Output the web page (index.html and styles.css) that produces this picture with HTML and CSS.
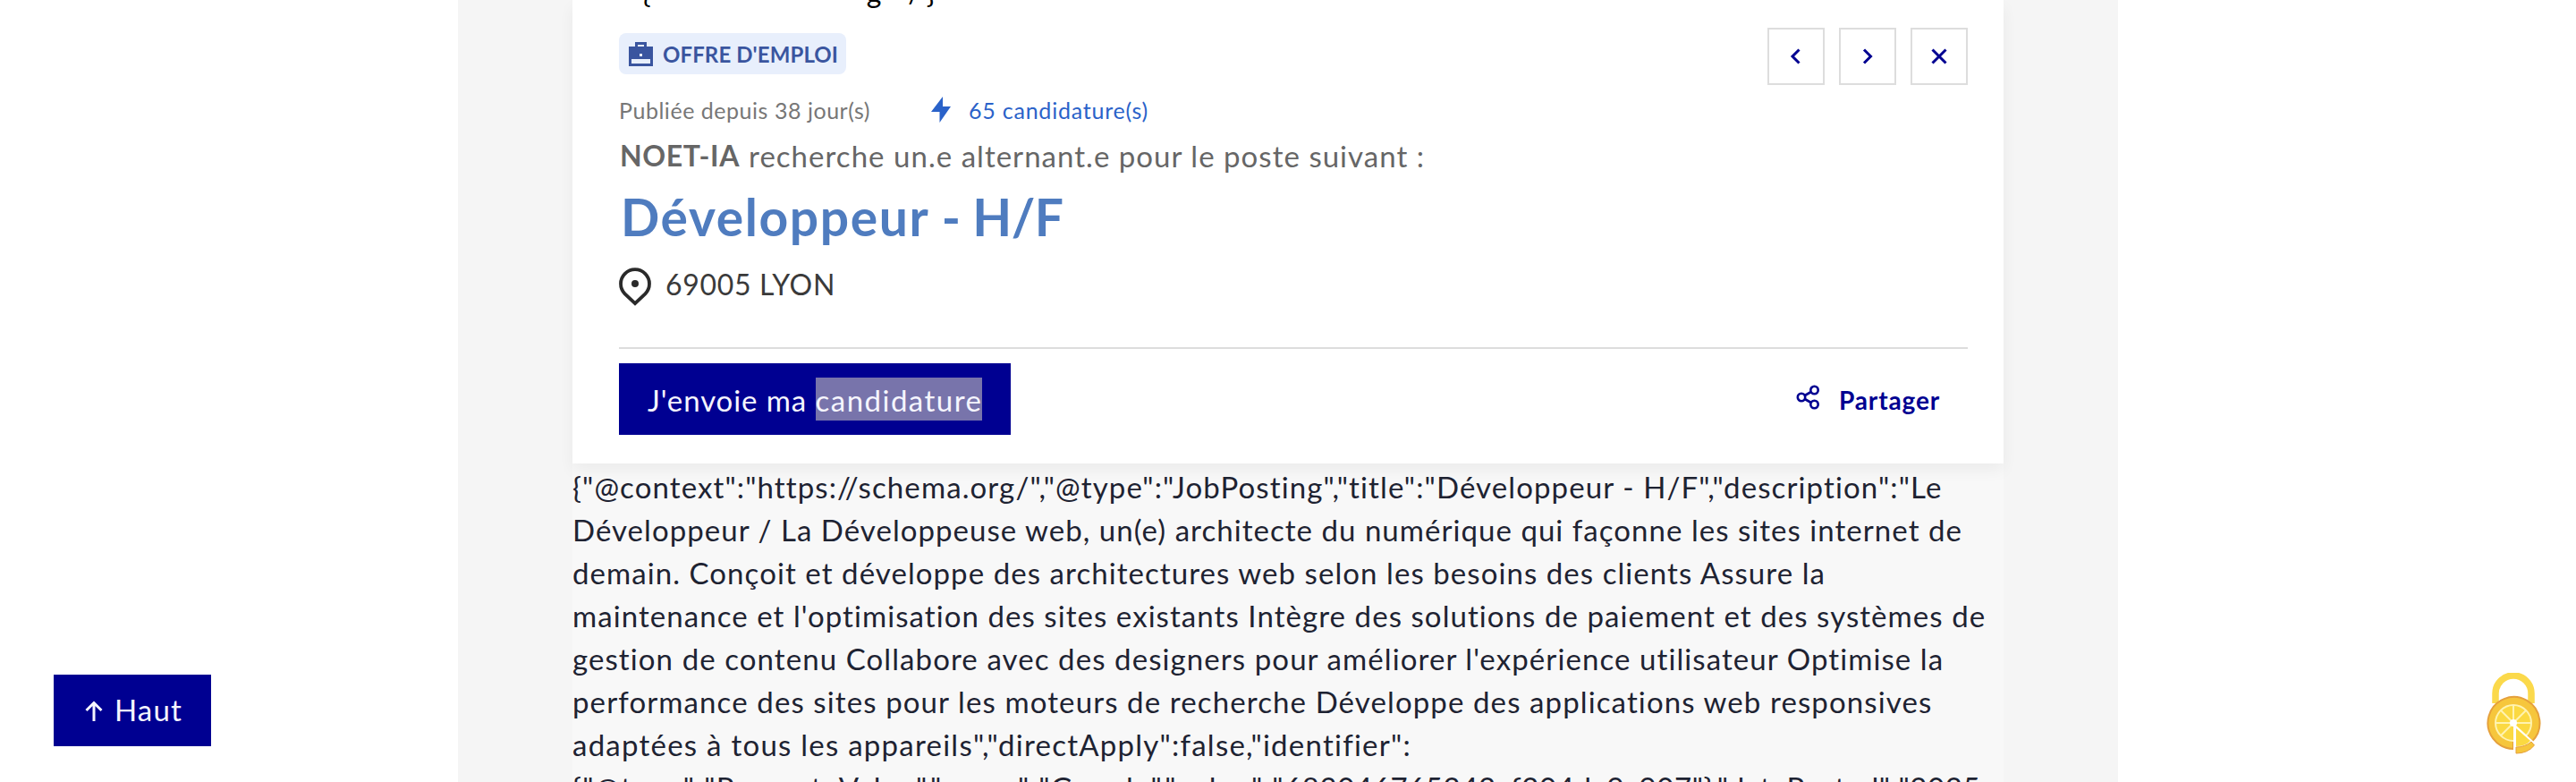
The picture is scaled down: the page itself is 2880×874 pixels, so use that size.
FILE: index.html
```html
<!DOCTYPE html>
<html lang="fr">
<head>
<meta charset="utf-8">
<title>Développeur - H/F</title>
<link rel="stylesheet" href="styles.css">
</head>
<body>
<main class="page">
  <article class="offer">
    <header class="card">
      <div class="prev"><span class="p1">{</span><span class="p2">g</span><span class="p3">/</span><span class="p4">}</span></div>
      <div class="top">
        <div class="badge">
          <svg class="case" viewBox="0 0 27 27"><path d="M7 5V0h13v5h7v22H0V5zm3 0h7V3h-7zM3 19v5h21v-5zm9-6v3h3v-3z" fill="#3a559f" fill-rule="evenodd"/></svg>
          <span class="t-badge">OFFRE D'EMPLOI</span>
        </div>
        <nav class="nav">
          <a class="sq"><svg viewBox="0 0 24 24"><path d="M15.500 4.500 8 12l7.500 7.500"/></svg></a>
          <a class="sq"><svg viewBox="0 0 24 24"><path d="M8 4.500 15.500 12 8 19.500"/></svg></a>
          <a class="sq"><svg viewBox="0 0 24 24"><path d="m4.500 4.500 15 15m0-15-15 15"/></svg></a>
        </nav>
      </div>
      <div class="meta">
        <span class="t-pub">Publiée depuis 38 jour(s)</span>
        <svg class="bolt" viewBox="0 0 22 29"><path d="M13 0v11h9L9.500 29V17H0z" fill="#2a62c9"/></svg>
        <span class="t-cand">65 candidature(s)</span>
      </div>
      <p class="intro"><b class="t-co">NOET-IA</b><span class="t-intro">recherche un.e alternant.e pour le poste suivant :</span></p>
      <h1 class="title"><span class="role">Développeur</span> - H/F</h1>
      <div class="place">
        <svg class="pin" viewBox="0 0 36 43"><path d="M18 40.200 6.600 29.400a16 16 0 1 1 22.800 0z" fill="none" stroke="#2a2a2a" stroke-width="3.800"/><circle cx="18" cy="18" r="4" fill="#2a2a2a"/></svg>
        <span class="t-place">69005 LYON</span>
      </div>
      <div class="actions">
        <a class="apply"><span class="t-ap1">J'envoie ma&nbsp;</span><mark class="t-ap2">candidature</mark></a>
        <a class="share">
          <svg class="net" viewBox="0 0 27 28" fill="none" stroke="#000091" stroke-width="2.600"><circle cx="6" cy="14" r="4.200"/><circle cx="20.500" cy="6" r="4.200"/><circle cx="20.500" cy="22" r="4.200"/><path d="m9.800 12 7-4M9.800 16l7 4"/></svg>
          <span class="t-share">Partager</span>
        </a>
      </div>
    </header>
    <div class="json">
      <span class="line l1">{"@context":"https://schema.org/","@type":"JobPosting","title":"Développeur - H/F","description":"Le</span>
      <span class="line l2">Développeur / La Développeuse web, un(e) architecte du numérique qui façonne les sites internet de</span>
      <span class="line l3">demain. Conçoit et développe des architectures web selon les besoins des clients Assure la</span>
      <span class="line l4">maintenance et l'optimisation des sites existants Intègre des solutions de paiement et des systèmes de</span>
      <span class="line l5">gestion de contenu Collabore avec des designers pour améliorer l'expérience utilisateur Optimise la</span>
      <span class="line l6">performance des sites pour les moteurs de recherche Développe des applications web responsives</span>
      <span class="line l7">adaptées à tous les appareils","directApply":false,"identifier":</span>
      <span class="line"><span class="l8a">{"@type":"PropertyValue","name":"Google","value":"</span><span class="l8b">683046765242cf204da9c907"},"datePosted":"2025-</span></span>
    </div>
  </article>
</main>
<a class="up"><svg viewBox="0 0 20 23"><path d="M10 23V2M1.500 11 10 2.500l8.500 8.500" fill="none" stroke="#f5f5fe" stroke-width="3"/></svg><span class="t-up">Haut</span></a>
<a class="cookies">
  <svg viewBox="0 0 64 94">
    <path d="M12 34V23a20 20 0 0 1 40 0v11" fill="none" stroke="#fbd94b" stroke-width="7.500"/>
    <path d="M32 56V85A29 29 0 1 1 53 76.500z" fill="#f6c63c" stroke="#e5a03c" stroke-width="2"/>
    <circle cx="32" cy="56" r="20" fill="#fbd941" stroke="#fff3b0" stroke-width="2"/>
    <path d="M32 36v20M12 56h40M18 42l14 14M46 42 32 56M18 70l14-14" stroke="#fff3b0" stroke-width="2"/>
    <path d="M32 56v31h2l22-9z" fill="#fff"/>
    <path d="M35 62v20q11 0 16-6z" fill="#fbd941"/>
    <path d="M35 83v7q13 0 20.500-9L52 77q-7 6-17 6z" fill="#f6c63c" stroke="#e5a03c" stroke-width="1"/>
    <circle cx="32" cy="56" r="4" fill="#fff"/>
  </svg>
</a>
</body>
</html>
```
FILE: styles.css
```css
* { box-sizing: border-box; }
body { margin: 0; height: 874px; overflow: hidden; background: #fff; font-family: Lato, "Open Sans", sans-serif; font-size: 33px; line-height: 48px; color: #1e2332; }
.page { width: 1856px; height: 874px; margin: 0 auto; padding: 0 128px; background: #f5f5f5; overflow: hidden; }
.offer { background: #f8f8f8; height: 874px; }
.card { position: relative; height: 518px; padding: 0 40px 0 52px; background: #fff; box-shadow: 0 8px 16px rgba(0,0,0,.05); }
.prev { height: 31px; padding-left: 26px; display: flex; font-size: 32px; line-height: 32px; color: #000; overflow: hidden; }
.prev span { margin-top: -25px; }
.p2 { margin-left: 241px; }
.p3 { margin-left: 30px; }
.p4 { margin-left: 6px; }
.top { display: flex; justify-content: space-between; height: 64px; }
.badge { display: flex; align-items: center; width: 254px; height: 46px; margin-top: 6px; padding-left: 11px; border-radius: 8px; background: #e8effc; color: #3a559f; font-size: 24px; font-weight: 700; }
.case { width: 27px; height: 27px; margin-right: 11px; }
.t-badge { padding-top: 1px; letter-spacing: .1px; }
.nav { display: flex; gap: 16px; }
.sq { display: flex; align-items: center; justify-content: center; width: 64px; height: 64px; border: 2px solid #ddd; }
.sq svg { width: 24px; height: 24px; fill: none; stroke: #000091; stroke-width: 3; }
.meta { display: flex; align-items: center; height: 55px; font-size: 25px; color: #777; }
.t-pub { letter-spacing: .533px; }
.bolt { width: 22px; height: 29px; margin-left: 68px; }
.t-cand { margin-left: 20px; color: #2a62c9; letter-spacing: .774px; }
.intro { display: flex; gap: 10px; height: 48px; margin: 0; color: #666; padding-left: 1px; }
.t-co { font-size: 32px; letter-spacing: .6px; }
.t-intro { letter-spacing: 1.028px; }
.title { margin: 0; height: 88px; padding-left: 2px; line-height: 88px; font-size: 57px; letter-spacing: -.4px; color: #4f7cbf; }
.role { letter-spacing: 1.6px; }
.place { display: flex; align-items: center; height: 64px; color: #3a3a3a; }
.pin { width: 36px; height: 43px; margin-top: 4px; margin-right: 16px; }
.t-place { font-size: 32px; letter-spacing: .68px; }
.actions { display: flex; justify-content: space-between; margin-top: 38px; padding-top: 16px; border-top: 2px solid #ddd; }
.apply { display: flex; align-items: center; width: 438px; height: 80px; padding-left: 32px; background: #000091; color: #f5f5fe; }
.apply span, .apply mark { height: 48px; line-height: 51px; }
.apply mark { background: #7874ab; color: #f5f5fe; }
.t-ap1 { letter-spacing: .912px; }
.t-ap2 { letter-spacing: 1.487px; }
.share { display: flex; align-items: center; height: 76px; margin-right: 31px; color: #000091; font-size: 28px; font-weight: 700; }
.net { width: 27px; height: 28px; margin-right: 21px; }
.t-share { padding-top: 5px; letter-spacing: .861px; }
.json { padding-top: 2px; display: flex; flex-direction: column; align-items: flex-start; }
.line { flex: none; height: 48px; white-space: nowrap; }
.l1 { letter-spacing: 1.114px; }
.l2 { letter-spacing: 1.041px; }
.l3 { letter-spacing: 1.066px; }
.l4 { letter-spacing: 1.067px; }
.l5 { letter-spacing: 1.088px; }
.l6 { letter-spacing: 1.110px; }
.l7 { letter-spacing: 1.244px; }
.l8a { letter-spacing: 1.412px; }
.l8b { letter-spacing: .591px; }
.card span, .card mark { white-space: nowrap; }
.up { position: absolute; left: 60px; top: 754px; display: flex; align-items: center; width: 176px; height: 80px; padding-left: 35px; background: #000091; color: #f5f5fe; }
.up svg { width: 20px; height: 23px; margin-right: 13px; }
.t-up { padding-bottom: 2px; letter-spacing: 1.167px; }
.cookies { position: absolute; left: 2778px; top: 752px; }
.cookies svg { display: block; width: 64px; height: 94px; }
```
